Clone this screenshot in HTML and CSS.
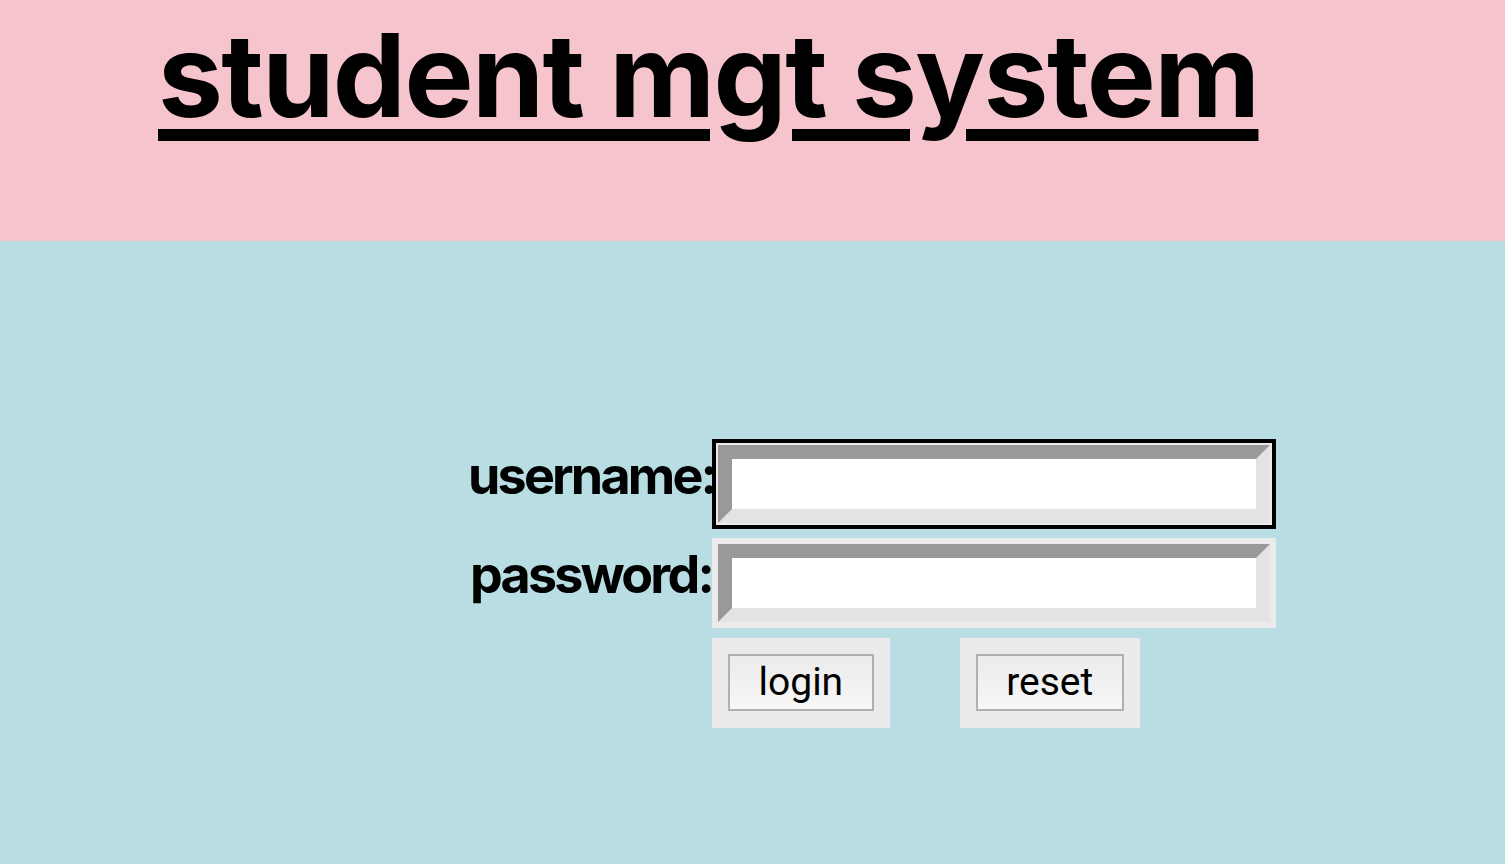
FILE: index.html
```html
<!DOCTYPE html>
<html lang="en">
<head>
<meta charset="utf-8">
<title>student mgt system</title>
<link rel="stylesheet" href="styles.css">
</head>
<body>
<header class="header">
  <h1 class="title">student mgt system</h1>
</header>
<main class="main">
  <form class="login-form">
    <label class="label" for="username">username:</label>
    <span class="field field-focused"><input class="input" id="username" type="text"></span>
    <label class="label" for="password">password:</label>
    <span class="field"><input class="input" id="password" type="password"></span>
    <span class="spacer"></span>
    <div class="actions">
      <span class="btn-cell"><button class="btn" type="button">login</button></span>
      <span class="btn-cell"><button class="btn" type="reset">reset</button></span>
    </div>
  </form>
</main>
</body>
</html>
```
FILE: styles.css
```css
html, body {
  margin: 0;
  padding: 0;
}
body {
  font-family: Inter, "Liberation Sans", sans-serif;
  background: #b8dde3;
  min-height: 864px;
}
.header {
  background: #f6c4cc;
  height: 241px;
  padding-left: 158px;
  box-sizing: border-box;
  overflow: hidden;
}
.title {
  margin: 17px 0 0;
  font-size: 116px;
  line-height: 1;
  font-weight: 700;
  color: #000;
  text-decoration: underline;
  text-decoration-thickness: 12px;
  text-underline-offset: 12px;
  letter-spacing: -1.6px;
}
.main {
  padding-top: 198px;
  padding-left: 468px;
}
.login-form {
  display: grid;
  grid-template-columns: 244px auto;
  justify-content: start;
  align-items: center;
  row-gap: 9px;
}
.label {
  font-size: 52px;
  font-weight: 700;
  color: #000;
  text-align: right;
  letter-spacing: -2.8px;
  padding-bottom: 18px;
  white-space: nowrap;
}
.field {
  display: block;
  padding: 6px;
  background: #ebebeb;
}
.field-focused {
  box-shadow: inset 0 0 0 4px #000;
}
.input {
  display: block;
  box-sizing: border-box;
  width: 552px;
  height: 78px;
  margin: 0;
  padding: 0;
  border: 14px solid;
  border-color: #999999 #e3e3e3 #e3e3e3 #999999;
  background: #fff;
  outline: none;
  font-size: 30px;
}
.actions {
  display: flex;
  gap: 70px;
  margin-top: 1px;
}
.btn-cell {
  display: block;
  background: #ebebeb;
  padding: 16px 16px 17px;
}
.btn {
  display: block;
  height: 57px;
  margin: 0;
  padding: 0 28.5px;
  border: 2px solid #b0b0b0;
  background: linear-gradient(#ebebeb, #f7f7f7);
  font-family: Roboto, "Liberation Sans", sans-serif;
  font-size: 39px;
  line-height: 1;
  color: #000;
}
```
